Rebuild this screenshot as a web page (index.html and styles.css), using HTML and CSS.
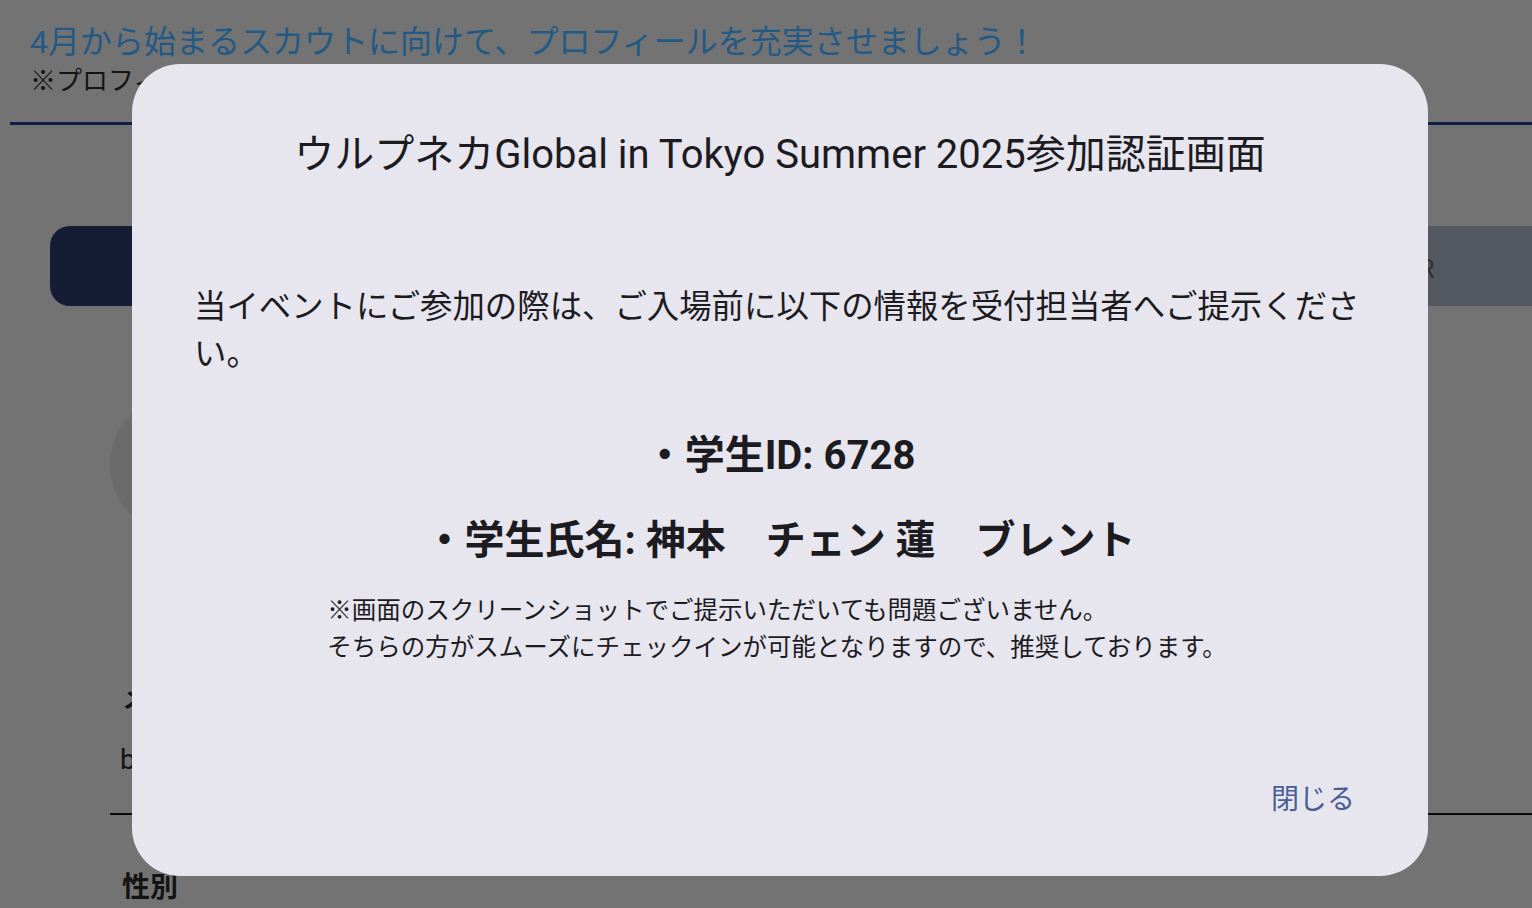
FILE: index.html
```html
<!DOCTYPE html>
<html lang="ja">
<head>
<meta charset="utf-8">
<title>参加認証画面</title>
<link rel="stylesheet" href="styles.css">
</head>
<body>
<div class="page">
  <header class="banner">
    <p class="banner-title">4月から始まるスカウトに向けて、プロフィールを充実させましょう！</p>
    <p class="banner-note">※プロフィールを入力すると企業からのスカウトが届きやすくなります</p>
  </header>
  <nav class="tabs">
    <div class="tab tab-active">基本情報</div>
    <div class="tab tab-inactive">自己PR</div>
  </nav>
  <div class="avatar"></div>
  <section class="field">
    <div class="field-label">メールアドレス</div>
    <div class="field-value">brent.kamimoto@example.com</div>
  </section>
  <section class="field">
    <div class="field-label field-label-lg">性別</div>
  </section>
</div>

<div class="overlay">
  <div class="dialog" role="dialog">
    <h1 class="dialog-title">ウルプネカGlobal in Tokyo Summer 2025参加認証画面</h1>
    <p class="dialog-lead">当イベントにご参加の際は、ご入場前に以下の情報を受付担当者へご提示ください。</p>
    <p class="dialog-item">・学生ID: 6728</p>
    <p class="dialog-item dialog-item-name">・学生氏名: 神本　チェン 蓮　ブレント</p>
    <div class="dialog-note-wrap">
      <p class="dialog-note">※画面のスクリーンショットでご提示いただいても問題ございません。<br>そちらの方がスムーズにチェックインが可能となりますので、推奨しております。</p>
    </div>
    <div class="dialog-actions">
      <button class="text-button" type="button">閉じる</button>
    </div>
  </div>
</div>
</body>
</html>
```

FILE: styles.css
```css
* {
  box-sizing: border-box;
}

html, body {
  margin: 0;
  padding: 0;
}

body {
  width: 1532px;
  height: 908px;
  overflow: hidden;
  background: #737373;
  font-family: "Roboto", "Noto Sans CJK JP", sans-serif;
  color: #111111;
}

.page {
  width: 1532px;
  height: 908px;
  overflow: hidden;
}

.banner {
  margin-left: 10px;
  padding: 22px 0 22px 20px;
  border-bottom: 3px solid #0f1e46;
}

.banner-title {
  margin: 0;
  font-size: 32px;
  line-height: 40px;
  color: #235a85;
  white-space: nowrap;
}

.banner-note {
  margin: 0;
  font-size: 26px;
  line-height: 38px;
  color: #141414;
  white-space: nowrap;
}

.tabs {
  display: flex;
  gap: 20px;
  margin: 101px 0 0 50px;
  white-space: nowrap;
}

.tab {
  flex: none;
  height: 80px;
  display: flex;
  align-items: center;
  justify-content: center;
  font-size: 26px;
}

.tab-active {
  width: 700px;
  border-radius: 20px 0 0 20px;
  background: #151d35;
  color: #737373;
}

.tab-inactive {
  width: 800px;
  background: #545861;
  color: #2e3035;
  justify-content: flex-start;
  padding-left: 580px;
}

.avatar {
  width: 140px;
  height: 140px;
  margin: 89px 0 0 110px;
  border-radius: 50%;
  background: #6b6b6b;
}

.field {
  margin-left: 110px;
}

.field:first-of-type {
  margin-top: 144px;
}

.field-label {
  padding-left: 12px;
  font-size: 26px;
  font-weight: 700;
  line-height: 40px;
  color: #141414;
}

.field-value {
  padding: 24px 0 36px 10px;
  font-size: 28px;
  line-height: 34px;
  color: #141414;
  border-bottom: 2px solid #0a0a0a;
}

.field-label-lg {
  margin-top: 53px;
  font-size: 28px;
}

.overlay {
  position: fixed;
  inset: 0;
  display: flex;
  align-items: flex-start;
  justify-content: flex-start;
  padding: 64px 0 0 132px;
}

.dialog {
  width: 1296px;
  height: 812px;
  display: flex;
  flex-direction: column;
  padding: 0 62px 48px;
  border-radius: 48px;
  background: #e7e6ee;
  color: #1c1b1f;
}

.dialog-title {
  margin: 64px 0 0;
  font-size: 40px;
  font-weight: 400;
  line-height: 54px;
  text-align: center;
  white-space: nowrap;
}

.dialog-lead {
  margin: 102px 0 0;
  font-size: 32.4px;
  line-height: 47px;
}

.dialog-item {
  margin: 51px 0 0;
  font-size: 40px;
  font-weight: 700;
  line-height: 54px;
  text-align: center;
  white-space: nowrap;
}

.dialog-item-name {
  margin-top: 31px;
}

.dialog-note-wrap {
  margin-top: 24px;
  padding-right: 6px;
  text-align: center;
}

.dialog-note {
  display: inline-block;
  margin: 0;
  font-size: 24.5px;
  line-height: 37px;
  text-align: left;
  white-space: nowrap;
}

.dialog-actions {
  margin-top: auto;
  display: flex;
  justify-content: flex-end;
}

.text-button {
  border: 0;
  background: transparent;
  padding: 8px 11px;
  font-family: inherit;
  font-size: 28px;
  line-height: 40px;
  color: #4a5e94;
  cursor: pointer;
}
```
